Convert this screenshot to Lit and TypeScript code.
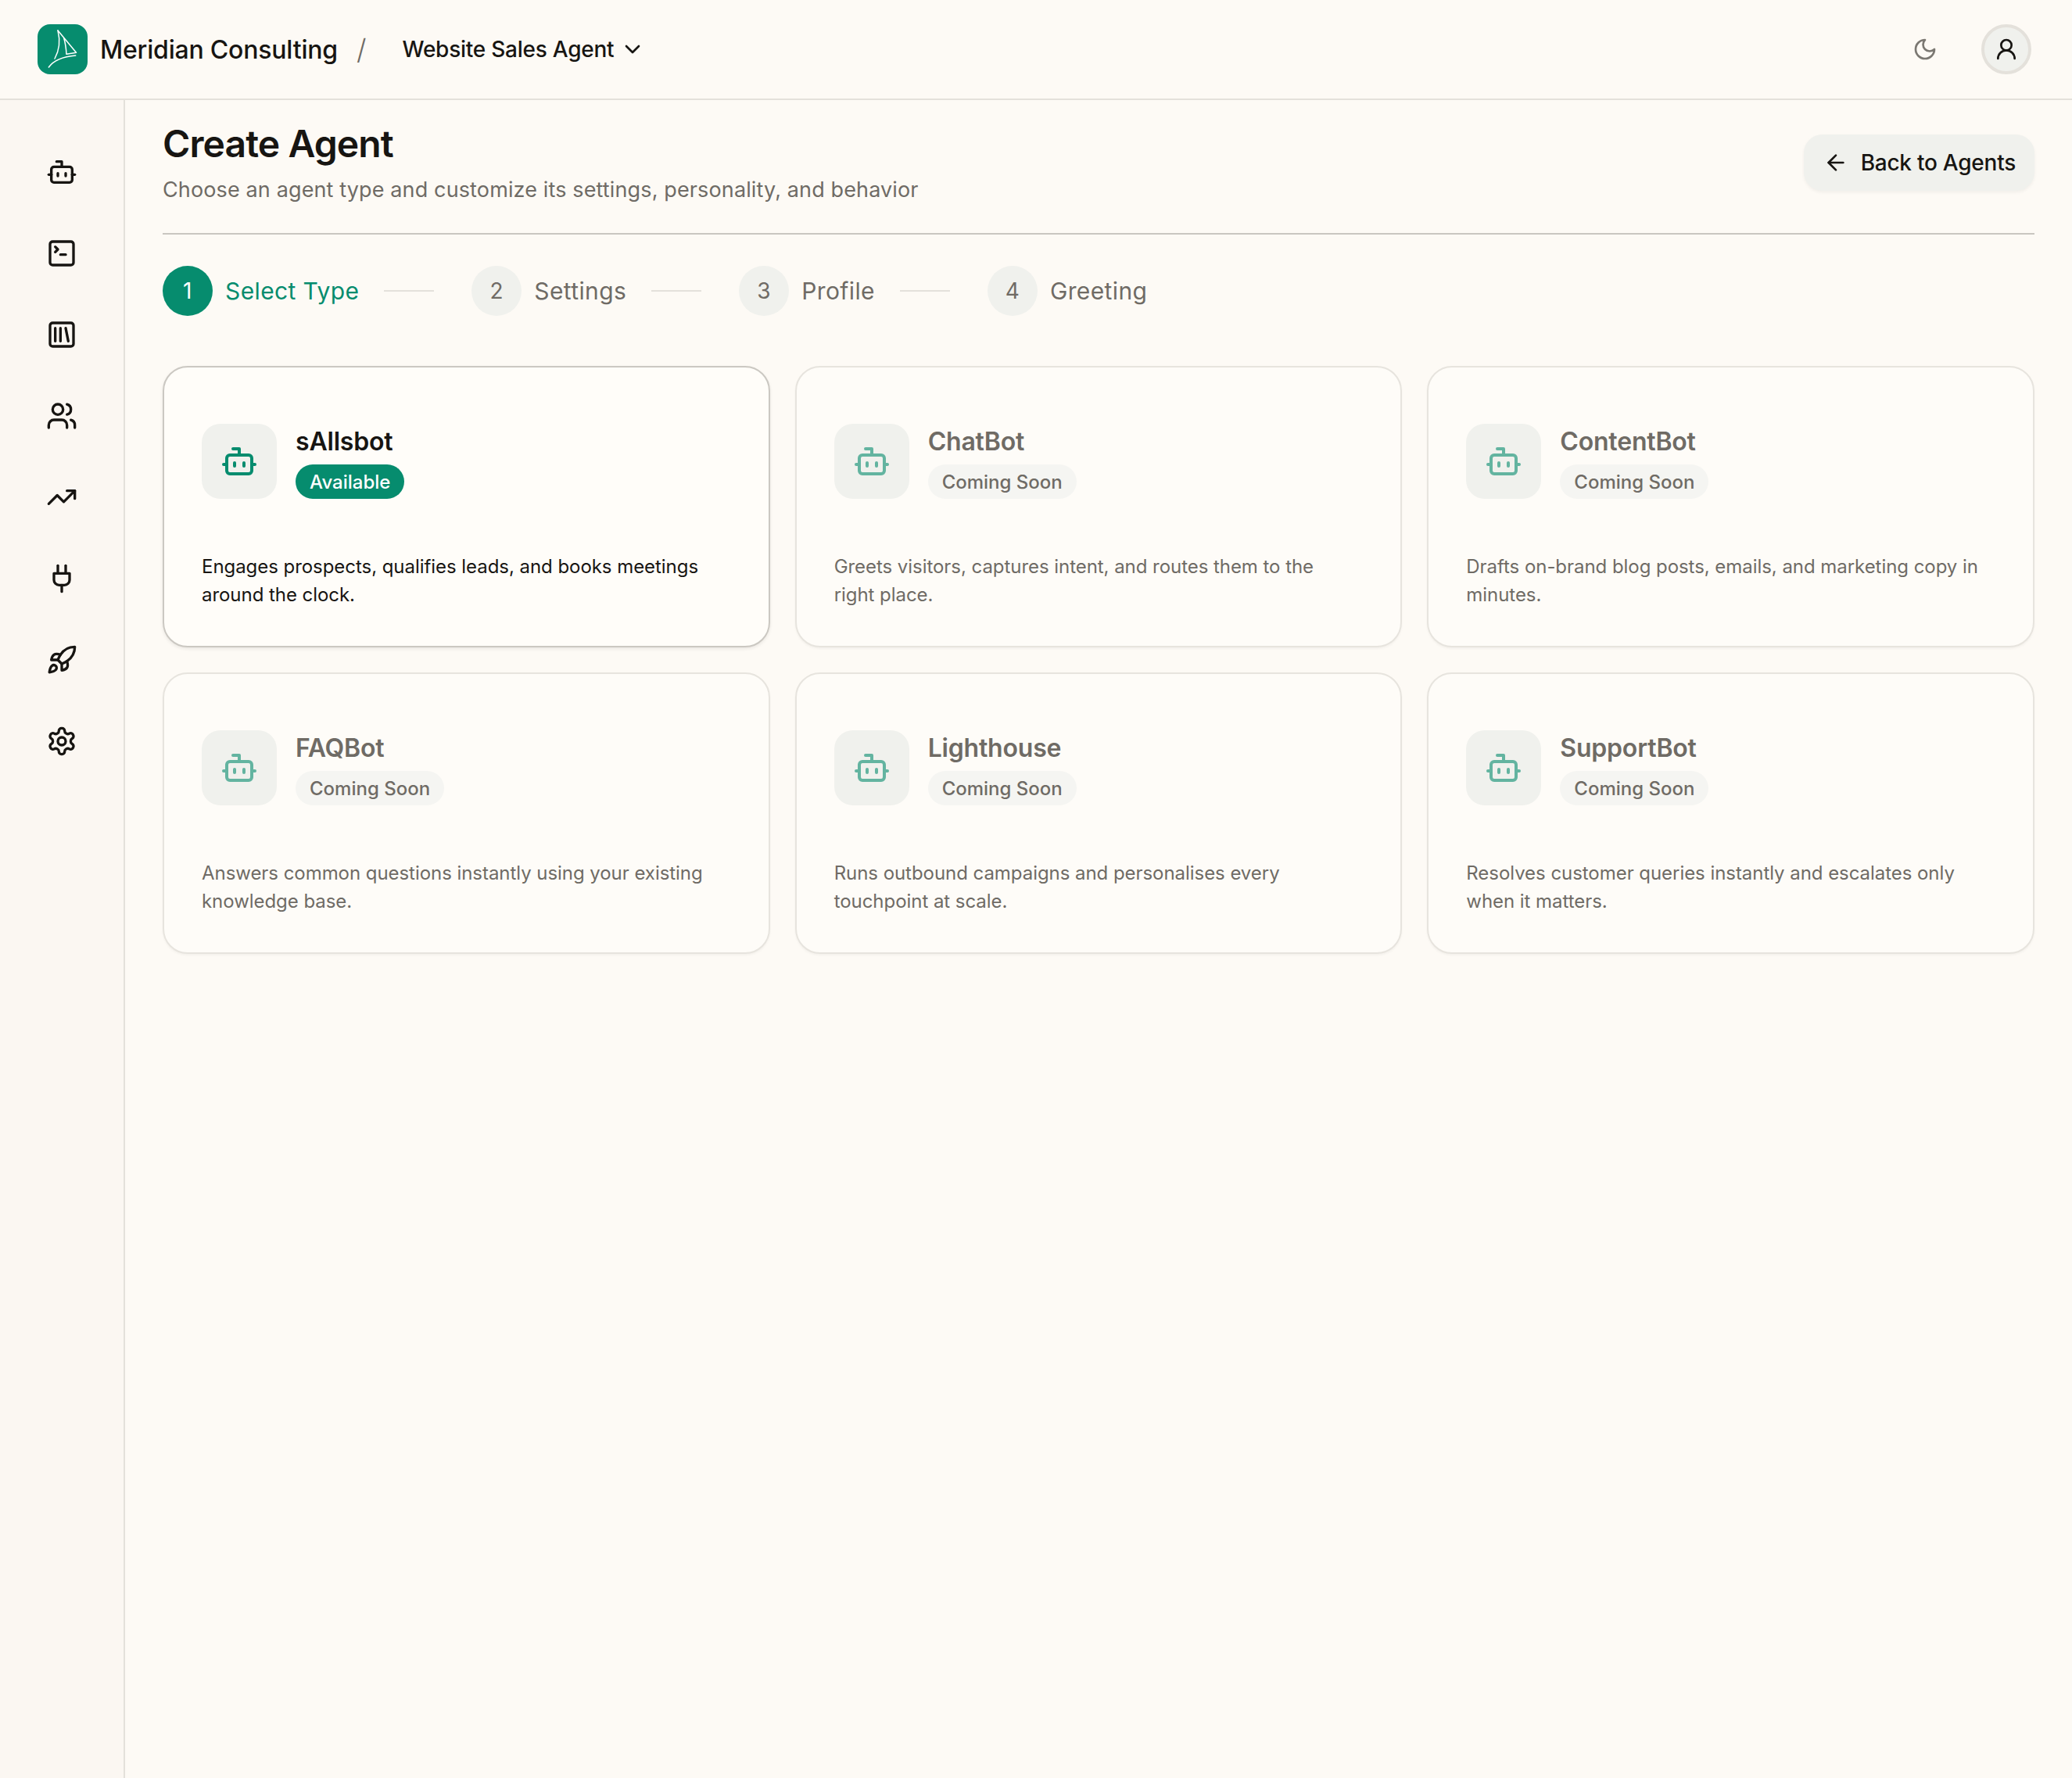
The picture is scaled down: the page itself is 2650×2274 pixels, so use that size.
import { LitElement, html, css, svg } from "lit";
import { customElement } from "lit/decorators.js";

const icon = (body: unknown, cls = "") =>
  html`<svg class="ico ${cls}" viewBox="0 0 24 24" fill="none" stroke="currentColor" stroke-width="2" stroke-linecap="round" stroke-linejoin="round">${body}</svg>`;

const I = {
  bot: svg`<path d="M12 8V4H8"/><rect width="16" height="12" x="4" y="8" rx="2"/><path d="M2 14h2"/><path d="M20 14h2"/><path d="M15 13v2"/><path d="M9 13v2"/>`,
  terminal: svg`<path d="m7 11 2-2-2-2"/><path d="M11 13h4"/><rect width="18" height="18" x="3" y="3" rx="2" ry="2"/>`,
  library: svg`<rect width="18" height="18" x="3" y="3" rx="2"/><path d="M7 7v10"/><path d="M11 7v10"/><path d="m15 7 2 10"/>`,
  users: svg`<path d="M16 21v-2a4 4 0 0 0-4-4H6a4 4 0 0 0-4 4v2"/><path d="M16 3.128a4 4 0 0 1 0 7.744"/><path d="M22 21v-2a4 4 0 0 0-3-3.87"/><circle cx="9" cy="7" r="4"/>`,
  trending: svg`<path d="M16 7h6v6"/><path d="m22 7-8.5 8.5-5-5L2 17"/>`,
  plug: svg`<path d="M12 22v-5"/><path d="M9 8V2"/><path d="M15 8V2"/><path d="M18 8v5a4 4 0 0 1-4 4h-4a4 4 0 0 1-4-4V8Z"/>`,
  rocket: svg`<path d="M4.5 16.5c-1.5 1.26-2 5-2 5s3.74-.5 5-2c.71-.84.7-2.13-.09-2.91a2.18 2.18 0 0 0-2.91-.09z"/><path d="m12 15-3-3a22 22 0 0 1 2-3.95A12.88 12.88 0 0 1 22 2c0 2.72-.78 7.5-6 11a22.35 22.35 0 0 1-4 2z"/><path d="M9 12H4s.55-3.03 2-4c1.62-1.08 5 0 5 0"/><path d="M12 15v5s3.03-.55 4-2c1.08-1.62 0-5 0-5"/>`,
  settings: svg`<path d="M12.22 2h-.44a2 2 0 0 0-2 2v.18a2 2 0 0 1-1 1.73l-.43.25a2 2 0 0 1-2 0l-.15-.08a2 2 0 0 0-2.73.73l-.22.38a2 2 0 0 0 .73 2.73l.15.1a2 2 0 0 1 1 1.72v.51a2 2 0 0 1-1 1.74l-.15.09a2 2 0 0 0-.73 2.73l.22.38a2 2 0 0 0 2.73.73l.15-.08a2 2 0 0 1 2 0l.43.25a2 2 0 0 1 1 1.73V20a2 2 0 0 0 2 2h.44a2 2 0 0 0 2-2v-.18a2 2 0 0 1 1-1.73l.43-.25a2 2 0 0 1 2 0l.15.08a2 2 0 0 0 2.73-.73l.22-.39a2 2 0 0 0-.73-2.73l-.15-.08a2 2 0 0 1-1-1.74v-.5a2 2 0 0 1 1-1.74l.15-.09a2 2 0 0 0 .73-2.73l-.22-.38a2 2 0 0 0-2.73-.73l-.15.08a2 2 0 0 1-2 0l-.43-.25a2 2 0 0 1-1-1.73V4a2 2 0 0 0-2-2z"/><circle cx="12" cy="12" r="3"/>`,
  moon: svg`<path d="M12 3a6 6 0 0 0 9 9 9 9 0 1 1-9-9Z"/>`,
  user: svg`<circle cx="12" cy="8" r="5"/><path d="M20 21a8 8 0 0 0-16 0"/>`,
  arrow: svg`<path d="m12 19-7-7 7-7"/><path d="M19 12H5"/>`,
  chevron: svg`<path d="m6 9 6 6 6-6"/>`,
};

const NAV = [I.bot, I.terminal, I.library, I.users, I.trending, I.plug, I.rocket, I.settings];
const STEPS = ["Select Type", "Settings", "Profile", "Greeting"];
const CARDS = [
  { name: "sAllsbot", on: true, text: "Engages prospects, qualifies leads, and books meetings around the clock." },
  { name: "ChatBot", on: false, text: "Greets visitors, captures intent, and routes them to the right place." },
  { name: "ContentBot", on: false, text: "Drafts on-brand blog posts, emails, and marketing copy in minutes." },
  { name: "FAQBot", on: false, text: "Answers common questions instantly using your existing knowledge base." },
  { name: "Lighthouse", on: false, text: "Runs outbound campaigns and personalises every touchpoint at scale." },
  { name: "SupportBot", on: false, text: "Resolves customer queries instantly and escalates only when it matters." },
];

@customElement("app-root")
export class AppRoot extends LitElement {
  static styles = css`
    :host {
      display: block;
      min-height: 2274px;
      background: #fdfaf5;
      color: #171512;
      font-family: Inter, "Noto Sans", sans-serif;
    }
    .shell { display: flex; flex-direction: column; min-height: 2274px; }
    .ico { display: block; flex: none; width: 40px; height: 40px; }

    header {
      display: flex;
      align-items: center;
      height: 126px;
      padding: 0 52px 0 48px;
      border-bottom: 2px solid #e4e1db;
    }
    .logo { width: 64px; height: 64px; flex: none; display: block; }
    .org { margin-left: 16px; font-size: 32px; font-weight: 550; letter-spacing: -0.2px; }
    .slash { margin-left: 24px; font-size: 36px; font-weight: 300; color: #6f6b65; }
    .agent { margin-left: 46px; display: flex; align-items: center; gap: 8px; font-size: 28px; font-weight: 500; letter-spacing: -0.25px; }
    .agent .ico { width: 32px; height: 32px; }
    .spacer { flex: 1; }
    .moon { width: 32px; height: 32px; color: #7b7872; margin-right: 56px; }
    .avatar {
      box-sizing: border-box;
      width: 64px; height: 64px;
      display: flex; align-items: center; justify-content: center;
      border-radius: 50%;
      background: #f0f1ed;
      border: 4px solid #e4e1db;
    }
    .avatar .ico { width: 32px; height: 32px; }

    .body { flex: 1; display: flex; }
    aside {
      width: 158px;
      flex: none;
      background: #fbf7f2;
      border-right: 2px solid #e4e1db;
      display: flex;
      flex-direction: column;
      align-items: center;
      gap: 64px;
      padding-top: 72px;
    }

    main { flex: 1; min-width: 0; padding: 24px 48px 0; }
    .head {
      display: flex;
      align-items: center;
      justify-content: space-between;
      padding-bottom: 35px;
      border-bottom: 2px solid #c9c6c0;
    }
    h1 { margin: 0; font-size: 48px; line-height: 64px; font-weight: 600; letter-spacing: -0.9px; }
    .sub { margin: 7px 0 0; font-size: 27px; line-height: 40px; color: #6f6b65; letter-spacing: 0.13px; }
    .back {
      display: flex; align-items: center; gap: 16px;
      height: 72px;
      padding: 0 24px 0 25px;
      border-radius: 24px;
      background: #f0f1ed;
      box-shadow: 0 2px 4px rgba(0,0,0,0.05);
      font-size: 28px;
      font-weight: 500;
      letter-spacing: -0.25px;
    }
    .back .ico { width: 32px; height: 32px; }

    .steps { display: flex; align-items: center; margin-top: 40px; }
    .step { display: flex; align-items: center; gap: 16px; color: #6f6b65; font-size: 30px; letter-spacing: 0.38px; }
    .step.on { color: #068c6e; }
    .num {
      width: 64px; height: 64px; flex: none;
      display: flex; align-items: center; justify-content: center;
      border-radius: 50%;
      background: #f0f1ed;
      font-size: 28px;
    }
    .step.on .num { background: #068c6e; color: #fff; }
    .line { width: 64px; height: 2px; background: #e4e1db; margin: 0 48px 0 32px; }

    .grid { display: grid; grid-template-columns: repeat(3, 1fr); gap: 32px; margin-top: 64px; }
    .card {
      box-sizing: border-box;
      height: 360px;
      padding: 72px 48px 48px;
      border: 2px solid #e7e4de;
      border-radius: 32px;
      background: #fefcf8;
      box-shadow: 0 2px 3px rgba(0,0,0,0.04);
    }
    .card.on { border-color: #cbc8c2; background: #fffdf9; box-shadow: 0 2px 4px rgba(0,0,0,0.08); }
    .top { display: flex; gap: 24px; }
    .tile {
      width: 96px; height: 96px; flex: none;
      display: flex; align-items: center; justify-content: center;
      border-radius: 24px;
      background: #f0f1ed;
      color: #068c6e;
    }
    .tile .ico { width: 48px; height: 48px; opacity: 0.6; }
    .card.on .tile .ico { opacity: 1; }
    .info { display: flex; flex-direction: column; align-items: flex-start; gap: 6px; }
    .name { font-size: 32px; line-height: 46px; font-weight: 600; color: #6f6b65; letter-spacing: -0.2px; }
    .card.on .name { color: #171512; }
    .badge {
      height: 44px;
      display: flex; align-items: center;
      padding: 0 18px;
      border-radius: 22px;
      font-size: 24px;
      font-weight: 500;
      background: #f5f5f2;
      color: #6f6b65;
    }
    .card.on .badge { background: #068c6e; color: #fff; }
    .desc { margin: 69px 0 0; max-width: 664px; font-size: 24px; line-height: 36px; color: #6f6b65; letter-spacing: -0.05px; }
    .card.on .desc { color: #171512; }
  `;

  render() {
    return html`
      <div class="shell">
        <header>
          <svg class="logo" viewBox="0 0 64 64" fill="none">
            <rect width="64" height="64" rx="16" fill="#068c6e"/>
            <g stroke="#fff" stroke-linecap="round" stroke-linejoin="round">
              <path d="M26 8 L49.5 36.3 L37 38.3 C36.5 30 35 22 33.5 17" stroke-width="1.5"/>
              <path d="M26 8 C29 20 28 33 22 44" stroke-width="1.5"/>
              <path d="M14.3 55 C20 47 31 41.5 48.7 40" stroke-width="1.5"/>
            </g>
          </svg>
          <span class="org">Meridian Consulting</span>
          <span class="slash">/</span>
          <span class="agent">Website Sales Agent ${icon(I.chevron)}</span>
          <span class="spacer"></span>
          ${icon(I.moon, "moon")}
          <span class="avatar">${icon(I.user)}</span>
        </header>
        <div class="body">
          <aside>${NAV.map((n) => icon(n))}</aside>
          <main>
            <div class="head">
              <div>
                <h1>Create Agent</h1>
                <p class="sub">Choose an agent type and customize its settings, personality, and behavior</p>
              </div>
              <div class="back">${icon(I.arrow)}<span>Back to Agents</span></div>
            </div>
            <div class="steps">
              ${STEPS.map(
                (s, i) => html`
                  <div class="step ${i === 0 ? "on" : ""}">
                    <span class="num">${i + 1}</span><span>${s}</span>
                  </div>
                  ${i < STEPS.length - 1 ? html`<div class="line"></div>` : ""}
                `
              )}
            </div>
            <div class="grid">
              ${CARDS.map(
                (c) => html`
                  <div class="card ${c.on ? "on" : ""}">
                    <div class="top">
                      <div class="tile">${icon(I.bot)}</div>
                      <div class="info">
                        <div class="name">${c.name}</div>
                        <div class="badge">${c.on ? "Available" : "Coming Soon"}</div>
                      </div>
                    </div>
                    <p class="desc">${c.text}</p>
                  </div>
                `
              )}
            </div>
          </main>
        </div>
      </div>
    `;
  }
}
